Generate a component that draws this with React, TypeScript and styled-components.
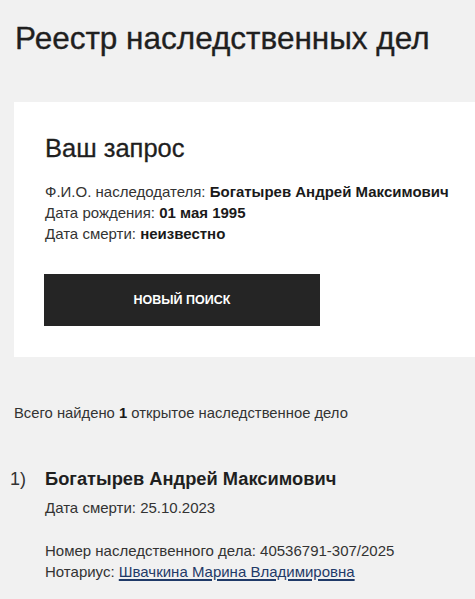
import React from "react";
import styled, { createGlobalStyle } from "styled-components";

const Global = createGlobalStyle`
  html, body { margin: 0; padding: 0; background: #f1f1f1; }
  body { font-family: "Liberation Sans", Arial, sans-serif; color: #222; overflow: hidden; }
`;

const Page = styled.div`
  padding: 19px 0 0 14px;
  display: flex;
  flex-direction: column;
`;

const Title = styled.h1`
  margin: 0 0 0 1px;
  font-size: 31.5px;
  line-height: 38px;
  font-weight: 400;
  color: #1f1f1f;
  -webkit-text-stroke: 0.35px #1f1f1f;
`;

const Card = styled.section`
  margin-top: 45px;
  background: #fff;
  height: 255px;
  box-sizing: border-box;
  padding: 30px 0 0 31px;
  display: flex;
  flex-direction: column;
`;

const CardTitle = styled.h2`
  margin: 0;
  font-size: 25.5px;
  line-height: 32px;
  font-weight: 400;
  color: #1f1f1f;
  -webkit-text-stroke: 0.3px #1f1f1f;
`;

const Info = styled.div`
  margin-top: 17px;
  font-size: 15px;
  line-height: 21px;
  color: #333;
`;

const Line = styled.div``;

const Strong = styled.b`
  font-weight: 700;
  color: #1a1a1a;
`;

const Button = styled.button`
  margin: 30px 0 0 -1px;
  width: 276px;
  height: 52px;
  border: none;
  background: #252525;
  color: #fff;
  font-family: inherit;
  font-size: 12.5px;
  font-weight: 700;
  text-transform: uppercase;
  cursor: pointer;
`;

const Summary = styled.p`
  margin: 46px 0 0 0;
  font-size: 14.8px;
  line-height: 20px;
  color: #333;
`;

const Result = styled.div`
  margin-top: 44px;
  display: grid;
  grid-template-columns: 31px 1fr;
`;

const Num = styled.span`
  font-size: 18px;
  line-height: 24px;
  color: #333;
  margin-left: -4px;
`;

const ResultBody = styled.div`
  display: flex;
  flex-direction: column;
`;

const Name = styled.div`
  font-size: 18.3px;
  line-height: 24px;
  font-weight: 700;
  color: #1f1f1f;
`;

const Field = styled.div<{ $gap?: number }>`
  margin-top: ${(p) => p.$gap ?? 0}px;
  font-size: 15px;
  line-height: 21px;
  color: #333;
`;

const Link = styled.a`
  color: #1f3a68;
  text-decoration: underline;
  text-underline-offset: 2px;
  text-decoration-thickness: 2px;
`;

export default function App() {
  return (
    <>
      <Global />
      <Page>
        <Title>Реестр наследственных дел</Title>
        <Card>
          <CardTitle>Ваш запрос</CardTitle>
          <Info>
            <Line>
              Ф.И.О. наследодателя: <Strong>Богатырев Андрей Максимович</Strong>
            </Line>
            <Line>
              Дата рождения: <Strong>01 мая 1995</Strong>
            </Line>
            <Line>
              Дата смерти: <Strong>неизвестно</Strong>
            </Line>
          </Info>
          <Button>Новый поиск</Button>
        </Card>
        <Summary>
          Всего найдено <Strong>1</Strong> открытое наследственное дело
        </Summary>
        <Result>
          <Num>1)</Num>
          <ResultBody>
            <Name>Богатырев Андрей Максимович</Name>
            <Field $gap={6}>Дата смерти: 25.10.2023</Field>
            <Field $gap={22}>Номер наследственного дела: 40536791-307/2025</Field>
            <Field>
              Нотариус: <Link href="#">Швачкина Марина Владимировна</Link>
            </Field>
          </ResultBody>
        </Result>
      </Page>
    </>
  );
}
